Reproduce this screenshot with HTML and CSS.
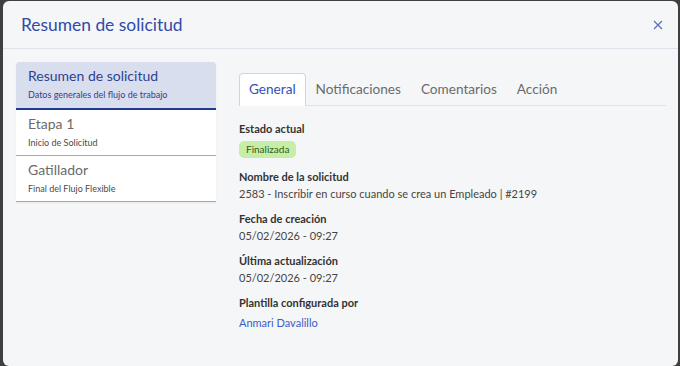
FILE: index.html
```html
<!DOCTYPE html>
<html lang="es">
<head>
  <meta charset="UTF-8" />
  <title>Resumen de solicitud</title>
  <meta name="viewport" content="width=device-width, initial-scale=1.0"/>
  <link rel="stylesheet" href="styles.css">
</head>
<body>

  <div class="modal">
    <div class="modal-header">
      <h1>Resumen de solicitud</h1>
      <button class="cerrar" title="Cerrar">
        <svg width="10" height="10" viewBox="0 0 10 10">
          <path d="M1 1 L9 9 M9 1 L1 9" stroke="#5b73c2" stroke-width="1.3" fill="none"/>
        </svg>
      </button>
    </div>

    <div class="modal-body">
      <div class="pasos">
        <div class="paso paso-activo">
          <div class="paso-titulo">Resumen de solicitud</div>
          <div class="paso-sub">Datos generales del flujo de trabajo</div>
        </div>
        <div class="paso">
          <div class="paso-titulo">Etapa 1</div>
          <div class="paso-sub">Inicio de Solicitud</div>
        </div>
        <div class="paso">
          <div class="paso-titulo">Gatillador</div>
          <div class="paso-sub">Final del Flujo Flexible</div>
        </div>
      </div>

      <div class="detalle">
        <div class="tabs">
          <a class="tab tab-activo" href="#">General</a>
          <a class="tab" href="#">Notificaciones</a>
          <a class="tab" href="#">Comentarios</a>
          <a class="tab" href="#">Acción</a>
        </div>

        <div class="campos">
          <div class="campo campo-estado">
            <div class="campo-label">Estado actual</div>
            <span class="badge">Finalizada</span>
          </div>
          <div class="campo">
            <div class="campo-label">Nombre de la solicitud</div>
            <div class="campo-valor">2583 - Inscribir en curso cuando se crea un Empleado | #2199</div>
          </div>
          <div class="campo">
            <div class="campo-label">Fecha de creación</div>
            <div class="campo-valor">05/02/2026 - 09:27</div>
          </div>
          <div class="campo">
            <div class="campo-label">Última actualización</div>
            <div class="campo-valor">05/02/2026 - 09:27</div>
          </div>
          <div class="campo">
            <div class="campo-label">Plantilla configurada por</div>
            <a class="campo-link" href="#">Anmari Davalillo</a>
          </div>
        </div>
      </div>
    </div>
  </div>

</body>
</html>
```

FILE: styles.css
```css
body {
  font-family: 'Lato', 'Open Sans', sans-serif;
  background: #3f3f3f;
  margin: 0;
  padding: 0;
  height: 366px;
  overflow: hidden;
}

.modal {
  margin: 1px 2px 0 3px;
  height: 365px;
  background: #f5f6f8;
  border-radius: 6px;
}

/* Cabecera */
.modal-header {
  height: 47px;
  padding: 0 12px 0 18px;
  display: flex;
  justify-content: space-between;
  align-items: center;
  border-bottom: 1px solid #dfe2ea;
}

.modal-header h1 {
  margin: 0;
  font-size: 17.4px;
  font-weight: 400;
  color: #2f4aa8;
}

.cerrar {
  background: none;
  border: none;
  padding: 0;
  width: 16px;
  height: 16px;
  display: flex;
  align-items: center;
  justify-content: center;
  cursor: pointer;
}

.modal-body {
  display: flex;
  gap: 23px;
  padding: 13px 12px 0 13px;
}

/* Pasos del flujo */
.pasos {
  width: 200px;
  flex-shrink: 0;
  align-self: flex-start;
  border-radius: 4px 4px 0 0;
  overflow: hidden;
  box-shadow: 0 1px 2px rgba(0,0,0,0.06);
}

.paso {
  background: #ffffff;
  padding: 4px 12px 5px;
  border-bottom: 1px solid #a9a9a9;
}

.paso-activo {
  background: #d9deef;
  padding-bottom: 6px;
  border-bottom: 2px solid #1f3a8f;
}

.paso-titulo {
  font-size: 14px;
  line-height: 20px;
  color: #6b6b6b;
}

.paso-sub {
  font-size: 9px;
  line-height: 14px;
  margin-top: 2px;
  color: #4a4a4a;
}

.paso-activo .paso-titulo,
.paso-activo .paso-sub {
  color: #2e428f;
}

/* Detalle */
.detalle {
  flex-grow: 1;
  padding-top: 11px;
}

.tabs {
  display: flex;
  border-bottom: 1px solid #dfe2ea;
}

.tab {
  padding: 0 9px;
  height: 31px;
  line-height: 30px;
  font-size: 13.6px;
  color: #6b6b6b;
  text-decoration: none;
  border: 1px solid transparent;
  border-bottom: none;
  border-radius: 4px 4px 0 0;
  margin-bottom: -1px;
}

.tab-activo {
  background: #ffffff;
  border-color: #d3d5da;
  color: #3451b2;
  height: 32px;
}

.campos {
  padding-top: 14px;
}

.campo {
  margin-bottom: 8px;
}

.campo-estado {
  margin-bottom: 10px;
}

.campo-label {
  font-size: 11px;
  line-height: 17px;
  font-weight: 700;
  color: #333333;
}

.campo-valor {
  font-size: 11px;
  line-height: 17px;
  color: #454545;
}

.campo-link {
  font-size: 11px;
  line-height: 17px;
  color: #3e5cc5;
  text-decoration: none;
}

.badge {
  display: inline-block;
  margin-top: 2px;
  padding: 0 7px;
  height: 17px;
  line-height: 17px;
  font-size: 10px;
  color: #2f5a1d;
  background: #c6eea6;
  border-radius: 5px;
}
```
